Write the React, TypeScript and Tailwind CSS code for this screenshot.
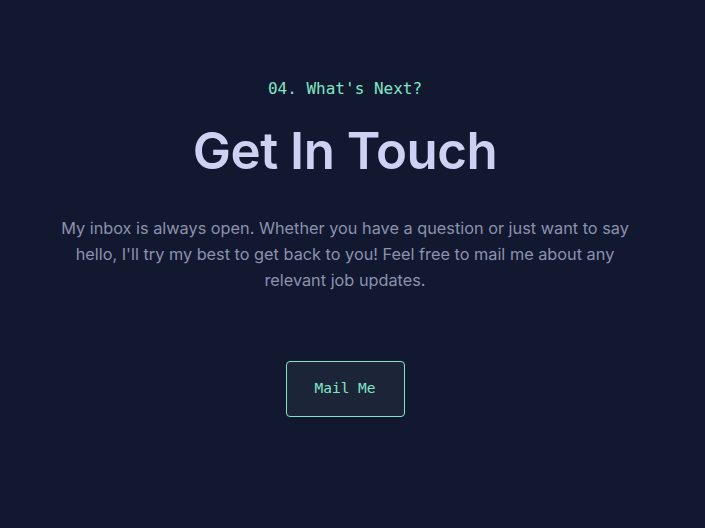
export default function App() {
  return (
    <div className="min-h-[528px] w-full bg-[#121830] flex flex-col items-center pt-[79px] pr-[15px]">
      <p className="text-[16px] leading-[20px] text-[#80e6c6] font-['DejaVu_Sans_Mono',monospace]">
        04. What's Next?
      </p>
      <h2 className="mt-[20px] text-[51px] leading-[64px] font-semibold text-[#cdd1f2] tracking-[-0.5px] font-['Inter',sans-serif]">
        Get In Touch
      </h2>
      <p className="mt-[32px] max-w-[580px] text-center text-[16.3px] leading-[26px] text-[#8c92ad] font-['Inter',sans-serif]">
        My inbox is always open. Whether you have a question or just want to say hello, I'll try my best to get back to you! Feel free to mail me about any relevant job updates.
      </p>
      <button className="mt-[68px] w-[119px] h-[56px] rounded-[4px] border border-[#80e6c6] bg-[#1c2538] text-[14.5px] text-[#80e6c6] font-['DejaVu_Sans_Mono',monospace]">
        Mail Me
      </button>
    </div>
  );
}
